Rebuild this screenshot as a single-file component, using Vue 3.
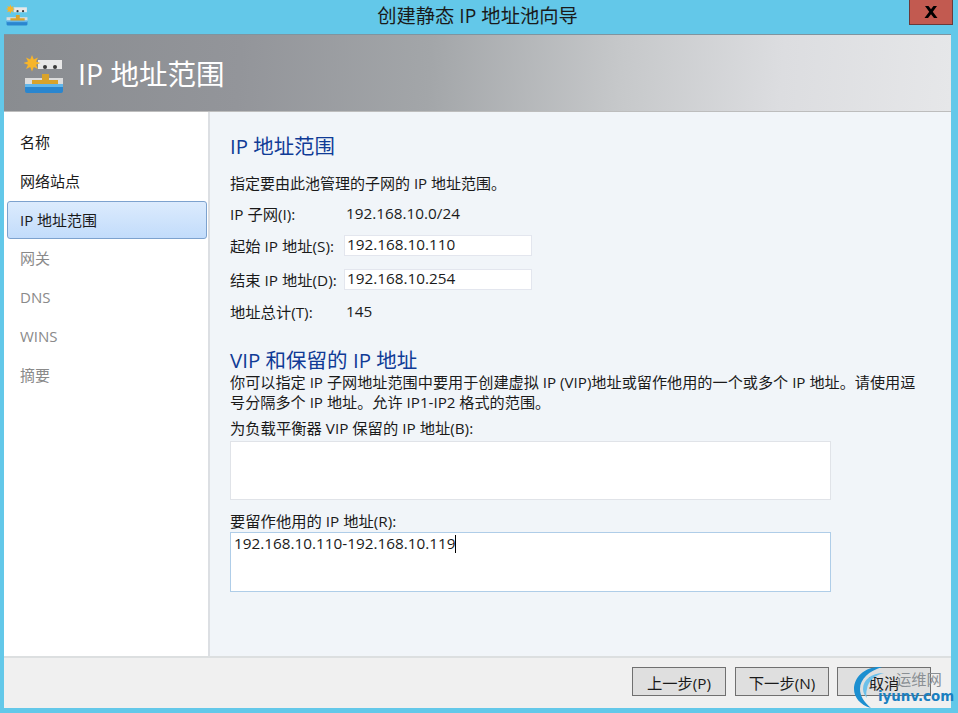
<script setup>
const steps = [
  { label: '名称', state: 'done' },
  { label: '网络站点', state: 'done' },
  { label: 'IP 地址范围', state: 'active' },
  { label: '网关', state: 'off' },
  { label: 'DNS', state: 'off' },
  { label: 'WINS', state: 'off' },
  { label: '摘要', state: 'off' }
]
</script>

<template>
  <div class="win">
    <div class="titlebar">
      <svg class="tb-icon blur" width="22" height="22" viewBox="0 0 40 40">
        <use href="#pool" />
      </svg>
      <div class="title">创建静态 IP 地址池向导</div>
      <div class="close">
        <svg width="14" height="12" viewBox="0 0 14 12"><path d="M1 0h3.500L7 3.200 9.500 0H13L8.800 5.800 13.500 12H10L7 8.200 4 12H.5l4.700-6.200z" fill="#000"/></svg>
      </div>
    </div>
    <div class="client">
      <header class="banner">
        <svg class="banner-icon blur" width="40" height="40" viewBox="0 0 40 40">
          <defs>
            <g id="pool">
              <rect x="14" y="6" width="24" height="9" fill="#e8e8e8"/>
              <circle cx="21" cy="13" r="2" fill="#3a3a3a"/><circle cx="31" cy="13" r="2" fill="#3a3a3a"/>
              <path d="M8 1l1.800 4.500L14 3.500 12 7.500l4.500 1.500L12 10.800l2 4.200-4.200-2L8 17.500 6.200 13 2 15l2-4.200L-.5 9 4 7.500 2 3.500l4.200 2z" fill="#f7b52a"/>
              <rect x="1" y="24" width="38" height="6" fill="#dcdcdc"/>
              <path d="M8 26h10v-6h7v6h9v6H8z" fill="#d9a32b"/>
              <path d="M1 31h38v6q0 2-2 2H3q-2 0-2-2z" fill="#2a86cf"/>
              <rect x="1" y="30" width="38" height="3" fill="#62b6ea"/>
            </g>
          </defs>
          <use href="#pool" />
        </svg>
        <h1 class="banner-title">IP 地址范围</h1>
      </header>
      <div class="body">
        <nav class="side">
          <div v-for="s in steps" :key="s.label" class="step" :class="s.state">{{ s.label }}</div>
        </nav>
        <main class="main">
          <h2 class="h first">IP 地址范围</h2>
          <p class="desc">指定要由此池管理的子网的 IP 地址范围。</p>
          <div class="grid">
            <div class="lab">IP 子网(I):</div><div class="val">192.168.10.0/24</div>
            <div class="lab">起始 IP 地址(S):</div><div class="inp">192.168.10.110</div>
            <div class="lab">结束 IP 地址(D):</div><div class="inp">192.168.10.254</div>
            <div class="lab">地址总计(T):</div><div class="val">145</div>
          </div>
          <h2 class="h second">VIP 和保留的 IP 地址</h2>
          <p class="para">你可以指定 IP 子网地址范围中要用于创建虚拟 IP (VIP)地址或留作他用的一个或多个 IP 地址。请使用逗号分隔多个 IP 地址。允许 IP1-IP2 格式的范围。</p>
          <div class="flabel l1">为负载平衡器 VIP 保留的 IP 地址(B):</div>
          <div class="area a1"></div>
          <div class="flabel l2">要留作他用的 IP 地址(R):</div>
          <div class="area focus">192.168.10.110-192.168.10.119<span class="caret"></span></div>
        </main>
      </div>
      <footer class="foot">
        <button class="btn prev">上一步(P)</button>
        <button class="btn">下一步(N)</button>
        <button class="btn">取消</button>
      </footer>
    </div>
    <div class="mark">
      <svg class="swirl" width="40" height="45" viewBox="0 0 40 45">
        <path d="M29 2C12 1 1 12 1 24c0 8 6 16 17 19C11 37 7 31 7 24 7 14 16 6 29 2z" fill="#1c8fd0"/>
        <path d="M31 8C18 8 10 15 10 24c0 4 2 7 4 9-1-3-1-6 0-9 1-8 8-14 17-16z" fill="#6cc0ea"/>
      </svg>
      <span class="mark-cn">运维网</span>
      <span class="mark-en">iyunv.com</span>
    </div>
  </div>
</template>

<style scoped>
.win {
  position: relative;
  width: 958px;
  height: 713px;
  background: #63c8e9;
  box-sizing: border-box;
  padding: 0 7px 5px 4px;
  overflow: hidden;
  display: flex;
  flex-direction: column;
  font-family: "Open Sans", "Noto Sans CJK SC", sans-serif;
  font-size: 15px;
  color: #1a1a1a;
}
.blur { filter: blur(0.5px); }
.titlebar {
  height: 34px;
  flex: none;
  position: relative;
  display: flex;
  align-items: flex-start;
  justify-content: center;
}
.tb-icon { position: absolute; left: 2px; top: 4px; }
.title { font-size: 19.300px; line-height: 32px; color: #1a1a1a; }
.close {
  position: absolute;
  right: -2px;
  top: 0;
  width: 44px;
  height: 25px;
  box-sizing: border-box;
  background: #c25a50;
  border: 1px solid #6a3a3a;
  border-top: none;
  display: flex;
  align-items: center;
  justify-content: center;
}
.client { flex: 1; display: flex; flex-direction: column; min-height: 0; }
.banner {
  height: 78px;
  flex: none;
  box-sizing: border-box;
  border-top: 1px solid #7f949f;
  border-bottom: 1px solid #bdbdbd;
  background: linear-gradient(94deg, #898c90 0%, #93959a 25%, #a3a6a9 45%, #c6c8ca 65%, #dcdde0 82%, #e6e7e9 100%);
  display: flex;
  align-items: center;
  padding-left: 20px;
  gap: 14px;
}
.banner-icon { flex: none; margin-top: 1px; }
.banner-title { margin: 0 0 2px; font-size: 28.500px; font-weight: 400; color: #fff; }
.body { flex: 1; display: flex; min-height: 0; }
.side {
  width: 206px;
  flex: none;
  box-sizing: border-box;
  background: #fff;
  border-right: 2px solid #dcdfe3;
  padding: 11px 1px 0 3px;
  display: flex;
  flex-direction: column;
  gap: 1.830px;
}
.step {
  height: 37px;
  line-height: 37px;
  padding-left: 12px;
  box-sizing: border-box;
  font-size: 15px;
  border: 1px solid transparent;
  color: #1a1a1a;
}
.step.off { color: #8a8a8a; }
.step.active {
  height: 38px;
  margin-bottom: -1px;
  background: linear-gradient(#dcebfd, #c2dcfb);
  border-color: #7da2ce;
  border-radius: 3px;
}
.main {
  flex: 1;
  background: #f1f5f9;
  padding: 0 0 0 20px;
  min-width: 0;
}
.h { margin: 0; font-weight: 400; color: #103b96; }
.first { margin-top: 20px; font-size: 20.400px; line-height: 28px; }
.desc { margin: 13px 0 0; line-height: 20px; }
.grid {
  display: grid;
  grid-template-columns: 114px 188px;
  grid-template-rows: 30px 33px 35px 30px;
  margin-top: 6px;
  align-items: center;
  font-size: 15.300px;
}
.lab { padding-bottom: 2px; }
.val { padding: 0 0 2px 2px; }
.inp {
  height: 21px;
  line-height: 17px;
  box-sizing: border-box;
  border: 1px solid #e3e6ee;
  background: #fff;
  padding-left: 2px;
  width: 188px;
}
.second { margin-top: 21px; font-size: 20.500px; line-height: 24px; }
.para { margin: 0; width: 692px; line-height: 20px; font-size: 15.150px; }
.flabel { line-height: 20px; font-size: 15.300px; }
.l1 { margin-top: 6px; }
.l2 { margin-top: 11px; }
.area {
  width: 601px;
  height: 60px;
  margin-top: 1px;
  box-sizing: border-box;
  background: #fff;
  border: 1px solid #e0e3e8;
  padding: 0 3px;
  line-height: 20px;
  font-size: 15.300px;
}
.a1 { height: 59px; margin-top: 3px; }
.area.focus { border-color: #afcde8; }
.caret {
  display: inline-block;
  width: 1px;
  height: 18px;
  background: #000;
  vertical-align: -4px;
}
.foot {
  height: 52px;
  flex: none;
  box-sizing: border-box;
  border-top: 2px solid #dcdfe0;
  background: #f0f0f0;
  display: flex;
  justify-content: flex-end;
  align-items: flex-start;
  gap: 8px;
  padding: 9px 20px 0 0;
}
.btn {
  width: 94px;
  height: 29px;
  padding: 0;
  background: #dfdfdf;
  border: 1px solid #707070;
  font: inherit;
  font-size: 15.300px;
  color: #1a1a1a;
}
.prev { margin-right: 1px; }
.mark { position: absolute; left: 0; top: 0; width: 958px; height: 713px; pointer-events: none; }
.swirl { position: absolute; left: 853px; top: 665px; }
.mark-cn { position: absolute; left: 896px; top: 669px; font-size: 15.300px; line-height: 20px; color: #8a8f94; }
.mark-en { position: absolute; left: 878px; top: 687px; font-size: 13.400px; line-height: 20px; font-weight: 700; color: #1a7fc0; font-family: "DejaVu Sans", sans-serif; }
</style>
